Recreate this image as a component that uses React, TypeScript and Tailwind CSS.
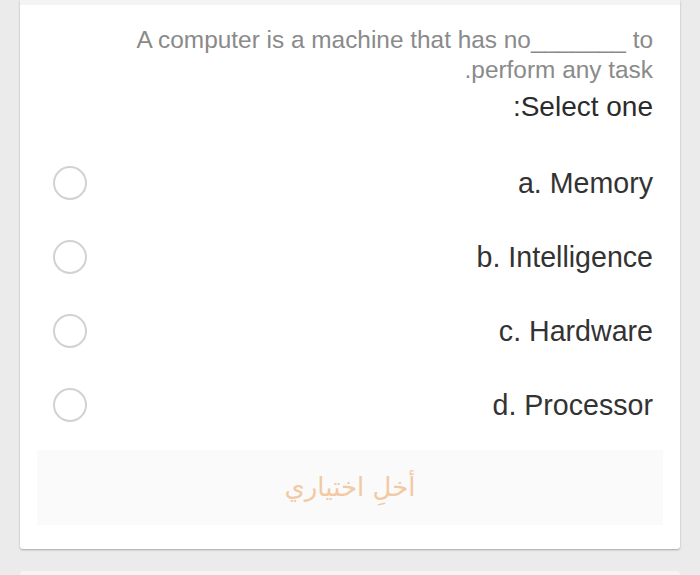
export default function App() {
  const options = ['a. Memory', 'b. Intelligence', 'c. Hardware', 'd. Processor']

  return (
    <div className="h-[575px] overflow-hidden bg-[#ebebeb] px-5" style={{ fontFamily: '"Liberation Sans", Arial, sans-serif' }}>
      {/* Question card */}
      <div className="bg-white rounded-b-[3px] shadow-[0_1px_2px_rgba(0,0,0,0.3)]">
        <div className="h-[5px] bg-[#f4f4f4]" />

        <div dir="rtl" className="pr-[27px] pl-[27px] pt-[20px] text-right">
          <div className="text-[24.4px] leading-[30px] text-[#8a8a8a]">
            <div>A computer is a machine that has no_______ to</div>
            <div>perform any task.</div>
          </div>
          <div className="mt-[4px] text-[28px] leading-[36px] text-[#2b2b2b]">Select one:</div>
        </div>

        <div className="mt-[21px]">
          {options.map((opt) => (
            <div key={opt} className="flex h-[74px] items-center justify-between pl-[33px] pr-[27px]">
              <span className="block h-[34px] w-[34px] rounded-full border-2 border-[#d2d2d2]" />
              <span className="text-[28.6px] text-[#333333]">{opt}</span>
            </div>
          ))}
        </div>

        <div className="mx-[17px] mt-[8px] flex h-[75px] items-center justify-center bg-[#fafafa]">
          <span dir="rtl" className="text-[26px] text-[#f2c9a2]" style={{ fontFamily: '"DejaVu Sans", sans-serif' }}>
            أخلِ اختياري
          </span>
        </div>
        <div className="h-[24px]" />
      </div>

      {/* Next card peeking in */}
      <div className="mt-[22px] h-[20px] rounded-t-[3px] bg-[#f4f4f4]" />
    </div>
  )
}
